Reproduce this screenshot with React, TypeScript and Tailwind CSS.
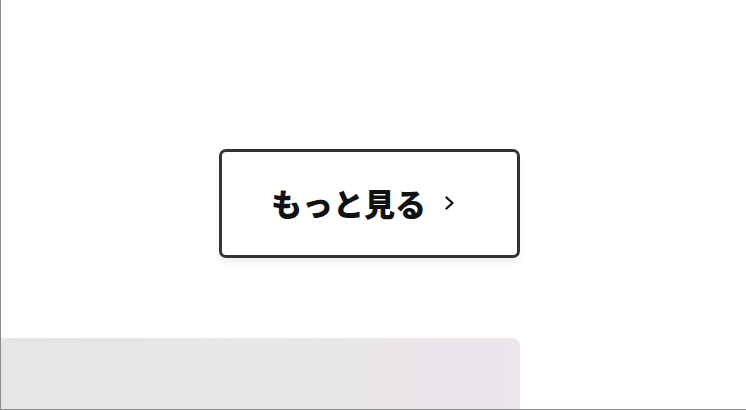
export default function App() {
  return (
    <div className="flex h-[410px] w-[746px] flex-col overflow-hidden border-b border-l border-[#8c8c8c] bg-white font-['Noto_Sans_CJK_JP','Noto_Sans',sans-serif]">
      <div className="ml-[218px] mt-[149px] flex h-[109px] w-[301px] shrink-0 items-center rounded-[7px] border-[3px] border-[#333333] bg-white pl-[49px] shadow-[0_5px_6px_rgba(0,0,0,0.06)]">
        <span className="-mt-[3px] text-[31px] font-extrabold leading-none text-[#111111]">もっと見る</span>
        <svg width="11" height="14" viewBox="0 0 11 14" className="-mt-[1px] ml-[18px]" fill="none">
          <path d="M2.5 1.5 L8.5 7 L2.5 12.5" stroke="#111111" strokeWidth="2.3" strokeLinecap="round" strokeLinejoin="round" />
        </svg>
      </div>
      <div className="mt-[80px] h-[80px] w-[519px] shrink-0 rounded-tr-[7px] bg-gradient-to-r from-[#e6e6e7] via-[#e7e6e8] to-[#ece5eb]" />
    </div>
  )
}
